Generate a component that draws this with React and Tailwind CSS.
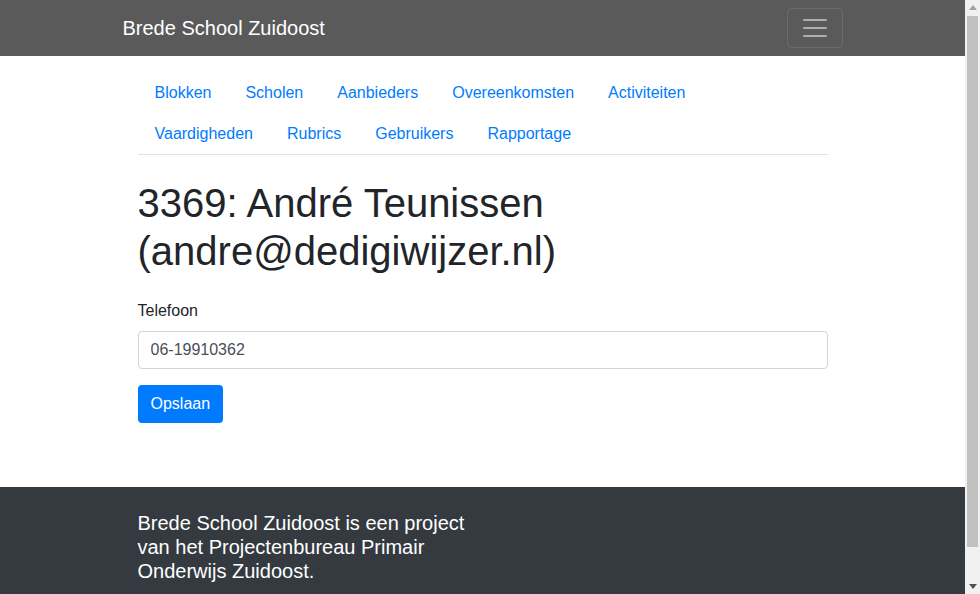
import React from 'react';

const links = [
  'Blokken',
  'Scholen',
  'Aanbieders',
  'Overeenkomsten',
  'Activiteiten',
  'Vaardigheden',
  'Rubrics',
  'Gebruikers',
  'Rapportage',
];

const App = () => {
  return (
    <div className="h-screen flex overflow-hidden bg-white text-[#212529] font-['Liberation_Sans',Arial,sans-serif] text-base">
      <div className="flex-1 min-w-0 overflow-hidden">
        {/* Navbar */}
        <nav className="bg-[#5a5a5a] py-2">
          <div className="w-[720px] mx-auto flex items-center justify-between">
            <a href="#" className="text-white text-[20px] leading-[30px] py-[5px]">
              Brede School Zuidoost
            </a>
            <button className="w-[56px] h-[40px] border border-white/10 rounded flex items-center justify-center">
              <svg width="30" height="30" viewBox="0 0 30 30">
                <path
                  d="M4 7h22M4 15h22M4 23h22"
                  stroke="rgba(255,255,255,0.5)"
                  strokeWidth="2"
                  strokeLinecap="round"
                />
              </svg>
            </button>
          </div>
        </nav>

        {/* Main */}
        <div className="w-[720px] mx-auto px-[15px] pt-4">
          <ul className="flex flex-wrap border-b border-[#dee2e6]">
            {links.map((l) => (
              <li key={l} className="-mb-px">
                <a
                  href="#"
                  className="block px-4 py-2 leading-6 text-[#007bff] border border-transparent rounded-t"
                >
                  {l}
                </a>
              </li>
            ))}
          </ul>

          <h1 className="mt-6 mb-2 text-[40px] leading-[48px] font-medium">
            3369: André Teunissen (andre@dedigiwijzer.nl)
          </h1>

          <form className="pt-4" onSubmit={(e) => e.preventDefault()}>
            <div className="mb-4">
              <label className="block mb-2 leading-6">Telefoon</label>
              <input
                type="text"
                defaultValue="06-19910362"
                className="block w-full h-[38px] px-3 py-1.5 border border-[#ced4da] rounded text-[#495057] leading-6 outline-none"
              />
            </div>
            <button className="h-[38px] px-[13px] bg-[#007bff] text-white rounded leading-6">
              Opslaan
            </button>
          </form>
        </div>

        {/* Footer */}
        <footer className="mt-[64px] bg-[#343a40] pt-6 pb-[50px]">
          <div className="w-[720px] mx-auto px-[15px]">
            <p className="w-[330px] text-white text-[20px] leading-6">
              Brede School Zuidoost is een project van het Projectenbureau Primair Onderwijs Zuidoost.
            </p>
          </div>
        </footer>
      </div>

      {/* Scrollbar */}
      <div className="w-[15px] shrink-0 bg-[#f1f1f1] flex flex-col items-center">
        <div className="h-[15px] flex items-center justify-center">
          <svg width="8" height="5" viewBox="0 0 8 5">
            <path d="M0 5L4 0L8 5Z" fill="#a3a3a3" />
          </svg>
        </div>
        <div className="w-[11px] h-[531px] mt-[1px] bg-[#c1c1c1]" />
        <div className="flex-1" />
        <div className="h-[15px] flex items-center justify-center">
          <svg width="8" height="5" viewBox="0 0 8 5">
            <path d="M0 0L8 0L4 5Z" fill="#505050" />
          </svg>
        </div>
      </div>
    </div>
  );
};

export default App;
